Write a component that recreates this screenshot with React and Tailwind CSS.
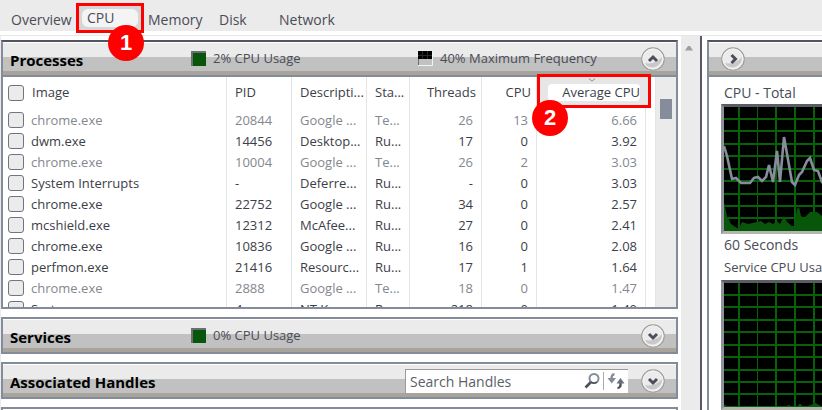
import { clsx } from 'clsx';

const tabs = [
  { name: 'Overview', className: 'w-[65px]' },
  { name: 'CPU', active: true, className: 'w-[72px] pr-1' },
  { name: 'Memory', className: 'w-[71px]' },
  { name: 'Disk', className: 'w-[60px]' },
  { name: 'Network', className: 'w-[65px]' },
];

const processes = [
  { image: 'chrome.exe', pid: '20844', description: 'Google ...', status: 'Te...', threads: '26', cpu: '13', average: '6.66' },
  { image: 'dwm.exe', pid: '14456', description: 'Desktop...', status: 'Ru...', threads: '17', cpu: '0', average: '3.92' },
  { image: 'chrome.exe', pid: '10004', description: 'Google ...', status: 'Te...', threads: '26', cpu: '2', average: '3.03' },
  { image: 'System Interrupts', pid: '-', description: 'Deferre...', status: 'Ru...', threads: '-', cpu: '0', average: '3.03' },
  { image: 'chrome.exe', pid: '22752', description: 'Google ...', status: 'Ru...', threads: '34', cpu: '0', average: '2.57' },
  { image: 'mcshield.exe', pid: '12312', description: 'McAfee...', status: 'Ru...', threads: '27', cpu: '0', average: '2.41' },
  { image: 'chrome.exe', pid: '10836', description: 'Google ...', status: 'Ru...', threads: '16', cpu: '0', average: '2.08' },
  { image: 'perfmon.exe', pid: '21416', description: 'Resourc...', status: 'Ru...', threads: '17', cpu: '1', average: '1.64' },
  { image: 'chrome.exe', pid: '2888', description: 'Google ...', status: 'Te...', threads: '18', cpu: '0', average: '1.47' },
  { image: 'System', pid: '4', description: 'NT Ker...', status: 'Ru...', threads: '218', cpu: '0', average: '1.40' },
];

const chevrons = {
  up: 'M8 14 L12 10 L16 14',
  down: 'M8 10 L12 14 L16 10',
  right: 'M10.5 8 L14.5 12 L10.5 16',
};

const RoundButton = ({ direction, label }) => (
  <button type="button" aria-label={label} className="size-6 shrink-0">
    <svg viewBox="0 0 24 24" className="size-6">
      <circle cx="12" cy="12" r="11.2" fill="#ebebeb" stroke="#a09e9a" strokeWidth="1.2" />
      <path d="M4 16 Q14 18 21 10 A10 10 0 0 1 6 19 Z" fill="#c8c8c8" />
      <circle cx="12" cy="12" r="10" fill="none" stroke="#f4f4f4" strokeWidth="1" />
      <path d={chevrons[direction]} fill="none" stroke="#4c4e5b" strokeWidth="3" />
    </svg>
  </button>
);

const Callout = ({ number, className }) => (
  <span
    className={clsx(
      'absolute z-20 flex size-9 items-center justify-center rounded-full bg-[#fe0000] font-["Liberation_Sans"] text-[22px] leading-none font-bold text-white',
      className
    )}
  >
    {number}
  </span>
);

const PanelHeader = ({ children, className }) => (
  <div
    className={clsx(
      'flex h-[37px] shrink-0 items-center border-2 border-[#858c99] bg-[linear-gradient(#fff_0_1px,#ebebeb_1px_15px,#c1c1c1_15px_29px,#a8a49c_29px)]',
      className
    )}
  >
    {children}
  </div>
);

const PanelTitle = ({ children }) => (
  <h2 className="w-[180px] shrink-0 pt-0.5 pl-[7px] text-[15px] leading-5 font-bold whitespace-nowrap text-black">{children}</h2>
);

const UsageSwatch = () => (
  <span className="mr-[7px] size-[15px] shrink-0 border-t-2 border-l-2 border-[#6c6e76] bg-[#07560a]" />
);

const FrequencySwatch = () => (
  <svg viewBox="0 0 15 15" className="mr-[7px] size-[15px] shrink-0">
    <rect width="15" height="15" fill="#f2f2f2" />
    <rect width="14" height="14" fill="#c1c1c1" />
    <rect width="14" height="8" fill="#000" />
    <path d="M0 4.5H14 M4.5 0V8 M9.5 0V8" stroke="#26282c" strokeWidth="1" />
    <path d="M0.5 8V14" stroke="#6c6e76" />
  </svg>
);

const Tick = ({ label }) => (
  <input
    type="checkbox"
    aria-label={label}
    className="block size-4 shrink-0 appearance-none rounded-[3px] border border-[#70747f] bg-[#ebebeb]"
  />
);

const ProcessTable = () => (
  <table className="w-full table-fixed border-collapse text-[13px] text-[#3c3e48]">
    <colgroup>
      <col />
      <col className="w-[65px]" />
      <col className="w-[75px]" />
      <col className="w-[43px]" />
      <col className="w-[72px]" />
      <col className="w-[55px]" />
      <col className="w-[109px]" />
      <col className="w-[10px]" />
    </colgroup>
    <thead>
      <tr className="h-8 *:border-r *:border-[#e4e4e4] *:p-0 *:font-normal *:whitespace-nowrap">
        <th className="text-left">
          <div className="flex items-center gap-2 pl-[5px]">
            <Tick label="Select all processes" />
            Image
          </div>
        </th>
        <th className="text-left"><span className="pl-2">PID</span></th>
        <th className="text-left"><span className="pl-2">Descripti...</span></th>
        <th className="text-left"><span className="pl-2">Sta...</span></th>
        <th className="text-right"><span className="pr-[5px]">Threads</span></th>
        <th className="text-right"><span className="pr-[5px]">CPU</span></th>
        <th className="relative text-right" aria-sort="descending">
          <div className="absolute -top-[3px] left-0 h-[34px] w-[114px] border-3 border-[#fe0000] bg-[#e6e6e6] px-2 pt-[7px] pb-1">
            <svg viewBox="0 0 8 4" className="absolute top-px left-[48px] h-1 w-2">
              <path d="M1 0.5 L4 3.2 L7 0.5" fill="none" stroke="#8d8f96" />
            </svg>
            <div className="flex h-full items-center justify-end rounded-[4px] bg-white">Average CPU</div>
          </div>
          <Callout number="2" className="top-[23px] -left-[5px]" />
        </th>
        <th />
      </tr>
    </thead>
    <tbody>
      {processes.map((row) => (
        <tr
          key={row.pid}
          className={clsx(
            'h-[21px] leading-5 *:border-r *:border-[#e4e4e4] *:p-0 *:whitespace-nowrap',
            row.status === 'Te...' && 'text-[#85878e]'
          )}
        >
          <td>
            <div className="flex items-center gap-[7px] pl-[5px]">
              <Tick label={row.image} />
              {row.image}
            </div>
          </td>
          <td><span className="pl-2">{row.pid}</span></td>
          <td><span className="pl-2">{row.description}</span></td>
          <td><span className="pl-2">{row.status}</span></td>
          <td className="text-right"><span className="pr-2">{row.threads}</span></td>
          <td className="text-right"><span className="pr-2">{row.cpu}</span></td>
          <td className="text-right"><span className="pr-2">{row.average}</span></td>
          <td />
        </tr>
      ))}
    </tbody>
  </table>
);

const gridColumns = [15, 52, 71, 90, 109, 128, 147, 166, 185];
const gridRows = [12, 24, 37, 49, 62, 74, 87, 99, 111];

const Graph = ({ label, children }) => (
  <div className="border-3 border-r-0 border-[#5b5d66] border-b-[#b5b5b0] border-l-[#8f929a] bg-black">
    <svg width="100%" height="124" role="img" aria-label={label} className="block">
      {gridColumns.map((x) => (
        <path key={x} d={`M${x} 0V124`} stroke="#07600a" strokeWidth="2" />
      ))}
      <path d="M33.5 0V124" stroke="#07600a" strokeWidth="1" />
      {gridRows.map((y) => (
        <path key={y} d={`M0 ${y}H400`} stroke="#07600a" strokeWidth="2" />
      ))}
      {children}
    </svg>
  </div>
);

export default function App() {
  return (
    <div className='bg-white font-["Open_Sans","Noto_Sans",sans-serif] text-[#4a4c57]'>
      {/* Tabs */}
      <nav className="flex h-[31px] items-start bg-[#ebebeb] pl-[11px]">
        {tabs.map((tab) =>
          tab.active ? (
            <div key={tab.name} className={clsx('relative pt-[3px]', tab.className)}>
              <div className="h-[30px] border-3 border-[#fe0000] bg-[#d6d6d6] p-[3px]">
                <button type="button" className="flex h-full w-full items-center rounded-md bg-[#f4f4f4] pl-[5px] text-sm leading-4">
                  {tab.name}
                </button>
              </div>
              <Callout number="1" className="top-[25px] left-[32px]" />
            </div>
          ) : (
            <button key={tab.name} type="button" className={clsx('pt-[10px] text-left text-sm leading-5', tab.className)}>
              {tab.name}
            </button>
          )
        )}
      </nav>
      <div className="h-[5px] border-b border-[#e6e6e6]" />

      <div className="flex h-[374px] overflow-hidden">
        {/* Panels */}
        <main className="flex min-w-0 flex-1 flex-col gap-2 border-l border-[#ebebeb] pt-1 pr-[3px]">
          <section>
            <PanelHeader className="border-t-[#51535e]">
              <PanelTitle>Processes</PanelTitle>
              <div className="flex w-[235px] items-center pl-2 text-[13px]">
                <UsageSwatch />
                2% CPU Usage
              </div>
              <div className="flex flex-1 items-center text-[13px] whitespace-nowrap">
                <FrequencySwatch />
                40% Maximum Frequency
              </div>
              <div className="flex pr-[11px]">
                <RoundButton direction="up" label="Collapse Processes" />
              </div>
            </PanelHeader>
            <div className="flex h-[232px] border-x-2 border-b-2 border-[#858c99]">
              <div className="h-[230px] min-w-0 flex-1 [clip-path:inset(-10px_0_0_0)]">
                <ProcessTable />
              </div>
              <div className="h-[230px] w-5 bg-[#ebebeb] pt-[22px] pl-1">
                <div className="h-5 w-3 bg-[#868c9b]" />
              </div>
            </div>
          </section>

          <PanelHeader>
            <PanelTitle>Services</PanelTitle>
            <div className="flex flex-1 items-center pl-2 text-[13px]">
              <UsageSwatch />
              0% CPU Usage
            </div>
            <div className="flex pr-[11px]">
              <RoundButton direction="down" label="Expand Services" />
            </div>
          </PanelHeader>

          <PanelHeader>
            <PanelTitle>Associated Handles</PanelTitle>
            <div className="flex flex-1 justify-end pr-[13px]">
              <div className="flex h-6 w-[223px] items-center border-t border-l border-[#9a9a9a] bg-white">
                <input
                  type="text"
                  aria-label="Search Handles"
                  placeholder="Search Handles"
                  className="w-[177px] pt-0.5 pl-1 text-[14px] leading-5 placeholder:text-[#5c5e68]"
                />
                <button type="button" aria-label="Search">
                  <svg viewBox="0 0 18 18" className="size-[18px]">
                    <path d="M8 10 L2.5 15.5" stroke="#4c4e5b" strokeWidth="2.6" />
                    <circle cx="11" cy="6.5" r="4.5" fill="#fff" stroke="#858c99" strokeWidth="2" />
                    <path d="M7.5 9.5 A4.5 4.5 0 0 0 14 10" fill="none" stroke="#4c4e5b" strokeWidth="1.5" />
                  </svg>
                </button>
                <button type="button" aria-label="Refresh" className="ml-auto border-l border-[#a9a9a9] px-[3px]">
                  <svg viewBox="0 0 18 18" className="size-[18px]">
                    <path d="M7.5 2.5 Q4.5 2 4.5 7" fill="none" stroke="#858c99" strokeWidth="2.4" />
                    <path d="M0.5 6 H9 L4.8 11.5 Z" fill="#858c99" />
                    <path d="M10.5 16 Q14 16 13.5 11" fill="none" stroke="#4c4e5b" strokeWidth="2.4" />
                    <path d="M9.5 11.5 H17.5 L13.5 6 Z" fill="#6b707d" />
                  </svg>
                </button>
              </div>
            </div>
            <div className="flex pr-[11px]">
              <RoundButton direction="down" label="Expand Associated Handles" />
            </div>
          </PanelHeader>

          <PanelHeader />
        </main>

        {/* Scroll bar between the panels and the graphs */}
        <div className="flex w-[21px] shrink-0 justify-center border-r-2 border-[#565863] bg-[#ebebeb] pt-[9px] pr-1">
          <svg viewBox="0 0 8 6" className="h-1.5 w-2">
            <path d="M0 5.5 L3 1 H5 L8 5.5 Z" fill="#a19f9a" />
          </svg>
        </div>

        {/* Graphs */}
        <aside className="w-[120px] shrink-0 overflow-hidden pt-1 pl-[5px]">
          <PanelHeader className="border-r-0 border-t-[#51535e] pl-3">
            <RoundButton direction="right" label="Hide graphs" />
          </PanelHeader>
          <div className="border-l-2 border-[#858c99] pl-3 text-[14px] leading-[22px] whitespace-nowrap">
            <h3 className="pt-[5px] pl-[3px]">CPU - Total</h3>
            <Graph label="CPU - Total">
              <path
                d="M0 125V95L3 109L7 117L13 121H15L18 115L24 117L33 115L37 114L41 117L45 115L49 117L53 114L56 117L60 109L63 115L68 119H70L73 102L75 100L77 109L80 111L86 105H93L98 109L110 112L400 114V125Z"
                fill="#07560a"
              />
              <path
                d="M0 39L3 49L8 72L12 71L17 76H26L30 71L34 70L38 74L42 70L45 58L49 75L53 44L56 75L60 30L68 75L71 78L75 68L78 65L83 54L86 51L90 63L94 64L98 75L110 72L400 74"
                fill="none"
                stroke="#868c9b"
                strokeWidth="2.6"
              />
            </Graph>
            <div className="pl-[3px]">60 Seconds</div>
            <h3 className="pb-0.5 pl-[3px] text-[13px]">Service CPU Usa</h3>
            <Graph label="Service CPU Usage">
              <path d="M0 124V122L4 124M62 124L65 122L67 124M73 124L76 121L79 124M82 124L88 122L91 120L94 122L98 124" fill="#07560a" stroke="#07560a" />
              <path d="M0 123.5H400" stroke="#07600a" />
            </Graph>
          </div>
        </aside>
      </div>
    </div>
  );
}
